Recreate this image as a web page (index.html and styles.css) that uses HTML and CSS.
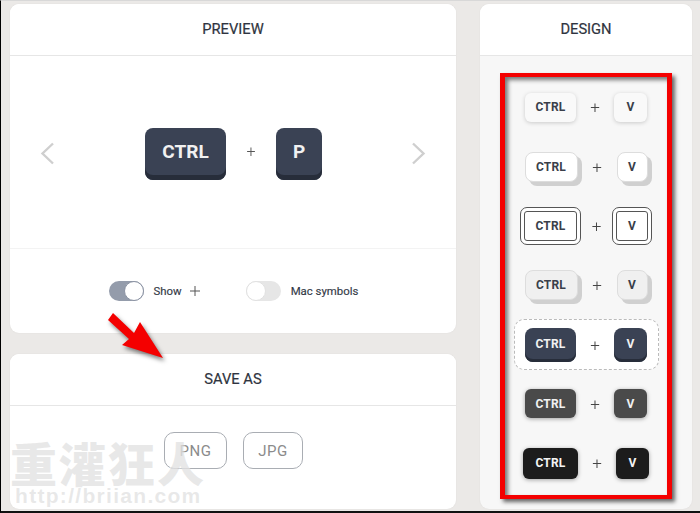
FILE: index.html
```html
<!DOCTYPE html>
<html lang="en">
<head>
<meta charset="utf-8">
<title>Keyboard shortcut maker</title>
<link rel="stylesheet" href="styles.css">
</head>
<body>
<div class="page">
  <div class="left">
    <section class="panel preview-panel">
      <h2 class="head">PREVIEW</h2>
      <div class="stage">
        <svg class="chev" width="15" height="23" viewBox="0 0 15 23"><path d="M13 1.500 L2.500 11.500 L13 21.500" /></svg>
        <div class="combo">
          <span class="bigkey bigkey-ctrl">CTRL</span>
          <span class="bigplus">+</span>
          <span class="bigkey bigkey-p">P</span>
        </div>
        <svg class="chev" width="15" height="23" viewBox="0 0 15 23"><path d="M2 1.500 L12.500 11.500 L2 21.500" /></svg>
      </div>
      <div class="options">
        <div class="opt opt-show">
          <span class="toggle on"><i class="knob"></i></span>
          <span class="opt-label">Show</span>
          <svg class="opt-plus" width="10" height="10" viewBox="0 0 10 10"><path d="M5 0V10M0 5H10"/></svg>
        </div>
        <div class="opt">
          <span class="toggle"><i class="knob"></i></span>
          <span class="opt-label">Mac symbols</span>
        </div>
      </div>
    </section>
    <section class="panel save-panel">
      <h2 class="head">SAVE AS</h2>
      <div class="save-body">
        <button class="save-btn save-png">PNG</button>
        <button class="save-btn save-jpg">JPG</button>
      </div>
    </section>
  </div>
  <aside class="panel design-panel">
    <h2 class="head">DESIGN</h2>
    <div class="designs">
      <div class="row"><span class="key s1 wide">CTRL</span><span class="plus">+</span><span class="key s1 narrow">V</span></div>
      <div class="row"><span class="key s2 wide">CTRL</span><span class="plus p39">+</span><span class="key s2 narrow">V</span></div>
      <div class="row"><span class="key s3 wide">CTRL</span><span class="plus p31">+</span><span class="key s3 narrow">V</span></div>
      <div class="row"><span class="key s4 wide">CTRL</span><span class="plus p39">+</span><span class="key s4 narrow">V</span></div>
      <div class="row"><div class="selected"><span class="key s5 wide">CTRL</span><span class="plus">+</span><span class="key s5 narrow">V</span></div></div>
      <div class="row"><span class="key s6 wide">CTRL</span><span class="plus">+</span><span class="key s6 narrow">V</span></div>
      <div class="row"><span class="key s7 wide">CTRL</span><span class="plus">+</span><span class="key s7 narrow">V</span></div>
    </div>
  </aside>

  <div class="redframe"></div>
  <svg class="arrow" width="70" height="60" viewBox="0 0 70 60"><path d="M11 1 L6 8 L27 27 L20 33 L61 46 L38 10 L32 21 Z"/></svg>
  <div class="watermark">
    <div class="wm-cjk">重灌狂人</div>
    <div class="wm-url">http://briian.com</div>
  </div>
</div>
</body>
</html>
```

FILE: styles.css
```css
* { box-sizing: border-box; }
html, body { margin: 0; padding: 0; }
body { width: 700px; height: 513px; overflow: hidden; font-family: Roboto, "Liberation Sans", sans-serif; background: #ebe9e7; }

.page {
  position: relative;
  width: 700px;
  height: 513px;
  display: flex;
  gap: 24px;
  padding: 3px 8px 0 9px;
  border-left: 1px solid #000;
  border-top: 1px solid #d8d8d8;
  border-bottom: 2px solid #111;
  background: #ebe9e7;
}

.left { width: 446px; display: flex; flex-direction: column; gap: 21px; }
.panel { background: #fff; border-radius: 9px; box-shadow: 0 0 2px rgba(0,0,0,.06); overflow: hidden; }
.head {
  margin: 0;
  height: 52px;
  padding-bottom: 2px;
  display: flex;
  align-items: center;
  justify-content: center;
  font-size: 14.700px;
  font-weight: 400;
  color: #2f3440;
  -webkit-text-stroke: .2px #2f3440;
  border-bottom: 1px solid #e6e6e6;
  background: #fff;
}

.preview-panel { height: 329px; }
.stage {
  height: 193px;
  display: flex;
  align-items: center;
  justify-content: space-between;
  padding: 3px 30px 0 30px;
  border-bottom: 1px solid #f3f3f3;
}
.chev { fill: none; stroke: #cfcfcf; stroke-width: 2.400px; }
.combo { display: flex; align-items: flex-start; margin-left: 1px; }
.bigkey {
  height: 52px;
  display: flex;
  align-items: center;
  justify-content: center;
  padding-bottom: 5px;
  background: #3a4254;
  border-radius: 8px;
  box-shadow: inset 0 -5px 0 #272d3a;
  color: #f1f1f1;
  font-size: 19px;
  font-weight: 700;
}
.bigkey-ctrl { width: 81px; }
.bigkey-p { width: 46px; }
.bigplus { width: 50px; height: 47px; display: flex; align-items: center; justify-content: center; font-size: 16px; font-weight: 300; color: #555; opacity: .99; }

.options { height: 84px; display: flex; align-items: center; justify-content: center; gap: 46px; padding: 0 0 0 1px; }
.opt { display: flex; align-items: center; gap: 10px; }
.opt-show { gap: 0; }
.opt-show .opt-label { margin-left: 10px; }
.opt-plus { margin-left: 8px; stroke: #555; stroke-width: 1; fill: none; }
.toggle {
  width: 35px;
  height: 20px;
  display: flex;
  align-items: center;
  border-radius: 10px;
  background: #e6e6e6;
}
.toggle.on { background: #949cab; justify-content: flex-end; }
.knob { width: 20px; height: 20px; border-radius: 50%; background: #fff; border: 1px solid #e0e0e0; }
.toggle.on .knob { border-color: #8b93a3; }
.opt-label { font-size: 11.400px; color: #333a47; -webkit-text-stroke: .15px #333a47; }

.save-panel { height: 155px; }
.save-body { display: flex; justify-content: center; gap: 16px; padding-top: 26px; }
.save-btn {
  height: 37px;
  padding: 0 0 0 1px;
  background: transparent;
  border: 1px solid #a9adb3;
  border-radius: 10px;
  font-family: inherit;
  font-size: 15px;
  letter-spacing: .5px;
  color: #8b8b8b;
}
.save-png { width: 63px; }
.save-jpg { width: 60px; }

.design-panel { width: 212px; height: 505px; background: #f7f7f7; }
.designs { padding-top: 21.500px; }
.row { height: 59.350px; display: flex; align-items: center; justify-content: center; }
.plus { width: 38px; text-align: center; font-size: 17px; font-weight: 300; color: #444; opacity: .99; }
.p39 { width: 39px; }
.p31 { width: 31px; }
.key {
  display: flex;
  align-items: center;
  justify-content: center;
  font-size: 12px;
  font-weight: 700;
  letter-spacing: .2px;
  color: #3a3f4a;
  border-radius: 6px;
}
.wide { width: 51px; }
.narrow { width: 33px; }
.s1 { height: 29px; background: #f9f9f9; box-shadow: 0 1px 4px rgba(0,0,0,.18); }
.s2, .s4 { height: 30px; border-radius: 8px; border: 1px solid #ddd; box-shadow: 4px 4px 0 #d0d0d0; }
.s2 { background: #fff; }
.s4 { background: #f0f0f0; }
.s2.wide, .s4.wide { width: 53px; }
.s2.narrow, .s4.narrow { width: 31px; }
.s3 {
  height: 38px;
  background: #fff;
  border: 1px solid #555;
  border-radius: 7px;
  outline: 1px solid #555;
  outline-offset: -5px;
}
.s3.wide { width: 61px; }
.s3.narrow { width: 40px; }
.selected {
  width: 145px;
  height: 51px;
  display: flex;
  align-items: center;
  justify-content: center;
  background: #fff;
  border: 1px dashed #bbb;
  border-radius: 10px;
}
.s5 { height: 34px; color: #f1f1f1; border-radius: 8px; padding-bottom: 1px; background: #3a4254; box-shadow: inset 0 -3px 0 #272d3a; }
.s6 { height: 29px; color: #f1f1f1; background: #4a4a4a; box-shadow: 0 1px 4px rgba(0,0,0,.35); }
.s7 { height: 31px; color: #f4f4f4; background: #1c1c1c; box-shadow: 0 1px 4px rgba(0,0,0,.35); }
.s7.wide { width: 55px; }
.s7.narrow { width: 33px; }

.redframe {
  position: absolute;
  left: 499px;
  top: 72px;
  width: 172px;
  height: 426px;
  border: solid #f40000;
  border-width: 4px 5px;
  box-shadow: 3px 3px 4px #666, inset 3px 3px 4px #777;
  pointer-events: none;
}
.arrow { position: absolute; left: 101px; top: 311px; fill: #f40000; filter: drop-shadow(2px 3px 2px rgba(0,0,0,.5)); }
.watermark { position: absolute; left: 9px; top: 436px; color: rgba(190,190,190,.35); text-shadow: 1px 1px 0 rgba(255,255,255,.45), -1px -1px 0 rgba(255,255,255,.45); pointer-events: none; }
.wm-cjk { font-family: "Noto Sans CJK TC", sans-serif; font-weight: 900; font-size: 47px; line-height: 49px; letter-spacing: 2px; }
.wm-url { font-family: "Liberation Sans", sans-serif; font-weight: 700; font-size: 21px; line-height: 20px; letter-spacing: 1.300px; padding-left: 5px; }
```
